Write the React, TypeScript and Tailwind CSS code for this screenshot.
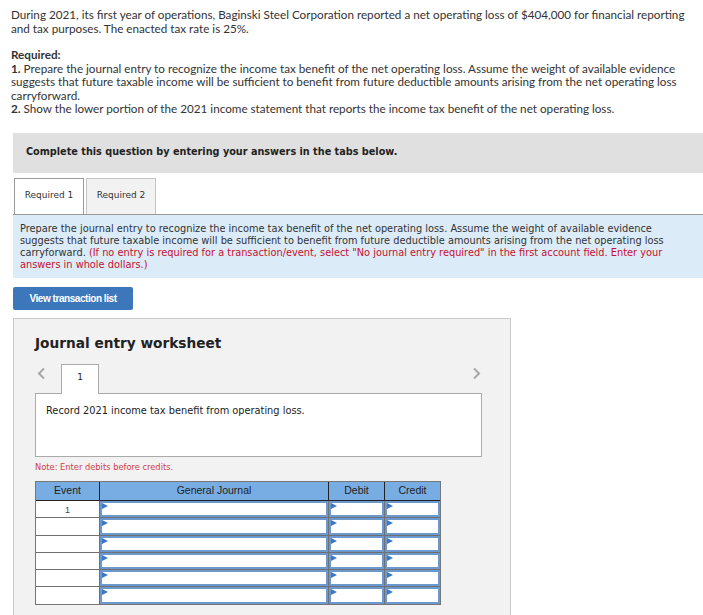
const ROWS = [
  { ev: '1', h: 'h-[16px]' },
  { ev: '', h: 'h-[17px]' },
  { ev: '', h: 'h-[16px]' },
  { ev: '', h: 'h-[16px]' },
  { ev: '', h: 'h-[16px]' },
  { ev: '', h: 'h-[17px]' },
];

function Flag() {
  return (
    <span className="absolute left-0 top-0 w-0 h-0 border-t-[3px] border-b-[3px] border-l-[6px] border-t-transparent border-b-transparent border-l-[#3a78c4]" />
  );
}

function InputCell({ w }: { w: string }) {
  return (
    <div className={`${w} h-full border-l border-[#707070]`}>
      <div className="relative h-full bg-white border-2 border-[#6a98cf]">
        <Flag />
      </div>
    </div>
  );
}

function Chevron({ dir }: { dir: 'left' | 'right' }) {
  return (
    <svg width="9" height="13" viewBox="0 0 9 13" className="text-[#a8a8a8]">
      <path
        d={dir === 'left' ? 'M7 1.5 L2 6.5 L7 11.5' : 'M2 1.5 L7 6.5 L2 11.5'}
        fill="none"
        stroke="currentColor"
        strokeWidth="2"
      />
    </svg>
  );
}

export default function App() {
  return (
    <div className="w-[703px] h-[615px] overflow-hidden bg-white">
      {/* Problem statement */}
      <div className="pl-[11px] pr-[4px] pt-[8px] [font-family:'Lato',sans-serif] text-[11.7px] leading-[13.5px] text-[#333]">
        <p>
          During 2021, its first year of operations, Baginski Steel Corporation reported a net operating loss of
          $404,000 for financial reporting and tax purposes. The enacted tax rate is 25%.
        </p>
        <p className="mt-[13px] font-bold">Required:</p>
        <p>
          <span className="font-bold">1.</span> Prepare the journal entry to recognize the income tax benefit of the
          net operating loss. Assume the weight of available evidence suggests that future taxable income will be
          sufficient to benefit from future deductible amounts arising from the net operating loss carryforward.
        </p>
        <p>
          <span className="font-bold">2.</span> Show the lower portion of the 2021 income statement that reports the
          income tax benefit of the net operating loss.
        </p>
      </div>

      {/* Instructions bar */}
      <div className="ml-[13px] mt-[17px] h-[40px] bg-[#e0e0e0] flex items-center pl-[13px]">
        <span className="[font-family:'DejaVu_Sans',sans-serif] font-bold text-[9.7px] text-[#222]">
          Complete this question by entering your answers in the tabs below.
        </span>
      </div>

      {/* Tabs */}
      <div className="ml-[14px] mt-[5px] flex gap-[2px] [font-family:'DejaVu_Sans',sans-serif] text-[9px] text-[#333]">
        <div className="w-[70px] h-[36px] bg-white border border-b-0 border-[#9a9a9a] flex items-center justify-center">
          Required 1
        </div>
        <div className="w-[70px] h-[36px] bg-[#f2f2f2] border border-b-0 border-[#c4c4c4] flex items-center justify-center">
          Required 2
        </div>
      </div>

      {/* Directions */}
      <div className="ml-[13px] border-t border-[#999] bg-[#dcebf8] pl-[7px] pr-[30px] pt-[8px] pb-[7px] [font-family:'DejaVu_Sans',sans-serif] text-[9.8px] leading-[12px] text-[#333]">
        Prepare the journal entry to recognize the income tax benefit of the net operating loss. Assume the weight of
        available evidence suggests that future taxable income will be sufficient to benefit from future deductible
        amounts arising from the net operating loss carryforward.{' '}
        <span className="text-[#c8102e]">
          (If no entry is required for a transaction/event, select "No journal entry required" in the first account
          field. Enter your answers in whole dollars.)
        </span>
      </div>

      <button className="block ml-[13px] mt-[9px] w-[120px] h-[23px] rounded-[2px] bg-[#3b77ba] text-white [font-family:'Liberation_Sans',sans-serif] font-bold text-[10px] tracking-[-0.45px]">
        View transaction list
      </button>

      {/* Worksheet */}
      <div className="ml-[13px] mt-[8px] w-[498px] h-[320px] bg-[#f2f2f2] border border-[#c8c8c8] pl-[21px] pt-[15px]">
        <h2 className="[font-family:'DejaVu_Sans',sans-serif] font-bold text-[13.7px] leading-[18px] text-[#222]">
          Journal entry worksheet
        </h2>

        <div className="mt-[11px] flex items-end w-[447px]">
          <div className="w-[26px] self-start pt-[4px] pl-[2px]">
            <Chevron dir="left" />
          </div>
          <div className="w-[38px] h-[30px] bg-white border border-b-0 border-[#aaa] flex justify-center pt-[6px] [font-family:'DejaVu_Sans',sans-serif] text-[9px] text-[#222] relative top-px">
            1
          </div>
          <div className="flex-1 self-start flex justify-end pt-[4px] pr-[1px]">
            <Chevron dir="right" />
          </div>
        </div>
        <div className="w-[447px] h-[64px] bg-white border border-[#aaa] pl-[10px] pt-[10px] [font-family:'DejaVu_Sans',sans-serif] text-[9.8px] text-[#222]">
          Record 2021 income tax benefit from operating loss.
        </div>
        <p className="mt-[4px] [font-family:'DejaVu_Sans',sans-serif] text-[8.3px] text-[#d0404a]">
          Note: Enter debits before credits.
        </p>

        {/* Table */}
        <div className="mt-[8px] w-[406px] border border-[#777] [font-family:'Liberation_Sans',sans-serif] text-[10.5px] text-[#222]">
          <div className="flex h-[19px] bg-[#78ade4] border-b border-[#222]">
            <div className="w-[63px] flex items-center justify-center">Event</div>
            <div className="w-[229px] flex items-center justify-center border-l border-[#222]">General Journal</div>
            <div className="w-[56px] flex items-center justify-center border-l border-[#222]">Debit</div>
            <div className="flex-1 flex items-center justify-center border-l border-[#222]">Credit</div>
          </div>
          {ROWS.map((row, i) => (
            <div
              key={i}
              className={`flex ${row.h} bg-white ${i < ROWS.length - 1 ? 'border-b border-[#707070] box-content' : ''}`}
            >
              <div className="w-[63px] flex justify-center pt-[3px] text-[9px] text-[#444]">{row.ev}</div>
              <InputCell w="w-[229px]" />
              <InputCell w="w-[56px]" />
              <InputCell w="flex-1" />
            </div>
          ))}
        </div>
      </div>
    </div>
  );
}
